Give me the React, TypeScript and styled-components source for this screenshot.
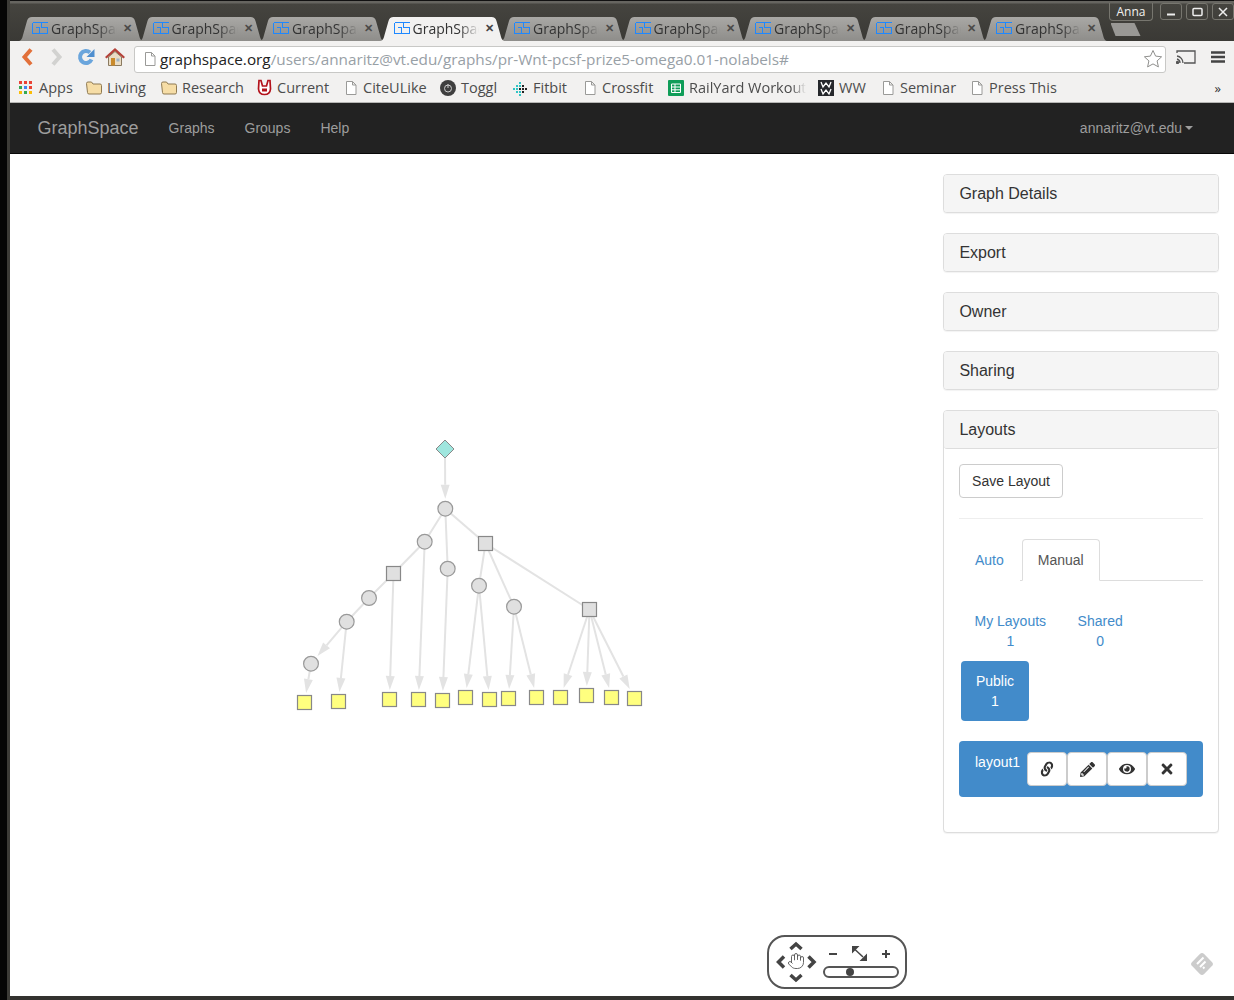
import React from "react"
import styled, { createGlobalStyle } from "styled-components"
import { FaEye, FaLink, FaPencilAlt, FaTimes } from "react-icons/fa"
import { Hand } from "lucide-react"

const GlobalStyle = createGlobalStyle`
    html, body {
        margin: 0;
        padding: 0;
        background: #000;
        overflow: hidden;
    }
`

const Desktop = styled.div`
    width: 1234px;
    height: 1000px;
    box-sizing: border-box;
    padding-left: 7px;
    background: #050505;
    overflow: hidden;
`

const Window = styled.div`
    height: 1000px;
    box-sizing: border-box;
    padding-left: 3px;
    display: flex;
    flex-direction: column;
    background: #3c3b37;
`

const TabStrip = styled.div`
    height: 41px;
    flex: none;
    box-sizing: border-box;
    border-top: 1px solid #111;
    background: linear-gradient(#666560 0, #666560 2px, #45443f 3px, #3a3935 100%);
`

const TitleRow = styled.div`
    height: 16px;
    display: flex;
    justify-content: flex-end;
    gap: 4px;
    padding-top: 2px;
    box-sizing: border-box;
`

const UserBadge = styled.div`
    width: 44px;
    height: 18px;
    box-sizing: border-box;
    margin-right: 3px;
    border: 1px solid #77766f;
    border-top: none;
    border-radius: 0 0 4px 4px;
    color: #f2f1f0;
    font: 12px/17px "Open Sans", sans-serif;
    text-align: center;
`

const WindowButton = styled.div`
    width: 22px;
    height: 17px;
    box-sizing: border-box;
    border: 1px solid #77766f;
    border-radius: 3px;
    display: flex;
    align-items: center;
    justify-content: center;
`

const TabRow = styled.div`
    display: flex;
    align-items: flex-end;
    height: 24px;
    padding-left: 8px;
`

const Tab = styled.div<{ $active?: boolean }>`
    position: relative;
    z-index: ${(p) => (p.$active ? 2 : 1)};
    width: 126px;
    height: 24px;
    flex: none;
    margin-right: -5.5px;
    box-sizing: border-box;
    padding: 0 0 2px 14px;
    display: flex;
    align-items: center;
    clip-path: path("M0 24 C3 24 4 22 5 18 L9 4 Q10 0 14 0 L112 0 Q116 0 117 4 L121 18 C122 22 123 24 126 24 Z");
    background: ${(p) => (p.$active ? "#f2f1f0" : "linear-gradient(#a9a8a5, #8e8d8a)")};
    color: #333;
    font: 14px "Open Sans", sans-serif;
`

const TabLabel = styled.span`
    width: 66px;
    margin-left: 3px;
    white-space: nowrap;
    overflow: hidden;
    -webkit-mask-image: linear-gradient(90deg, #000 70%, transparent 100%);
    mask-image: linear-gradient(90deg, #000 70%, transparent 100%);
`

const TabClose = styled.span<{ $active?: boolean }>`
    margin-left: 6px;
    font: bold 11px "Liberation Sans", sans-serif;
    color: ${(p) => (p.$active ? "#444" : "#4a4a48")};
`

const NewTab = styled.div`
    width: 30px;
    height: 13px;
    flex: none;
    margin: 0 0 5px 8px;
    background: #999895;
    clip-path: polygon(0 0, 24px 0, 30px 100%, 5px 100%);
`

const Toolbar = styled.div`
    height: 32px;
    flex: none;
    display: flex;
    align-items: flex-start;
    padding-left: 3px;
    background: #f2f1f0;
`

const NavButton = styled.div`
    width: 29px;
    height: 32px;
    flex: none;
    display: flex;
    align-items: center;
    justify-content: center;
`

const Omnibox = styled.div`
    width: 1032px;
    height: 27px;
    margin: 5px 0 0 5px;
    padding: 0 2px 2px 8px;
    box-sizing: border-box;
    flex: none;
    display: flex;
    align-items: center;
    border: 1px solid #c8c8c6;
    border-radius: 3px;
    background: #fff;
    font: 15.3px "Open Sans", sans-serif;
    white-space: nowrap;
`

const UrlHost = styled.span`
    margin-left: 3px;
    color: #222;
`

const UrlPath = styled.span`
    flex: 1;
    color: #98a0a6;
`

const ToolIcons = styled.div`
    display: flex;
    align-items: center;
    gap: 15px;
    margin: 9px 0 0 10px;
`

const Bookmarks = styled.div`
    height: 30px;
    flex: none;
    box-sizing: border-box;
    display: flex;
    align-items: center;
    padding: 0 10px 0 8px;
    border-bottom: 1px solid #b6b6b4;
    background: #f2f1f0;
    color: #4c4c4c;
    font: 14.5px "Open Sans", sans-serif;
`

const Bookmark = styled.div<{ $width: number }>`
    width: ${(p) => p.$width}px;
    flex: none;
    display: flex;
    align-items: center;
    gap: 5px;
    white-space: nowrap;
`

const FadedLabel = styled.span`
    width: 117px;
    overflow: hidden;
    -webkit-mask-image: linear-gradient(90deg, #000 88%, transparent 100%);
    mask-image: linear-gradient(90deg, #000 88%, transparent 100%);
`

const More = styled.span`
    margin-left: auto;
    margin-right: 3px;
    font: 13px "Open Sans", sans-serif;
    color: #333;
`

const Navbar = styled.div`
    height: 51px;
    flex: none;
    display: flex;
    align-items: center;
    padding: 0 41px 0 27.5px;
    background: #222;
    border-bottom: 1px solid #080808;
    box-sizing: border-box;
    color: #9d9d9d;
    font: 14px "Liberation Sans", sans-serif;
`

const Brand = styled.span`
    font-size: 18px;
    margin-right: 30px;
`

const NavLink = styled.span`
    margin-right: 30px;
`

const UserMenu = styled.span`
    margin-left: auto;
    display: flex;
    align-items: center;
    gap: 3px;
`

const Caret = styled.span`
    width: 0;
    height: 0;
    border-top: 4px solid #9d9d9d;
    border-left: 4px solid transparent;
    border-right: 4px solid transparent;
`

const Main = styled.div`
    position: relative;
    flex: 1;
    min-height: 0;
    display: flex;
    background: #fff;
    font: 14px/20px "Liberation Sans", sans-serif;
    color: #333;
`

const Canvas = styled.div`
    width: 933px;
    flex: none;
`

const Sidebar = styled.div`
    width: 276px;
    flex: none;
    padding-top: 20px;
    display: flex;
    flex-direction: column;
    gap: 20px;
`

const Panel = styled.div`
    border: 1px solid #ddd;
    border-radius: 4px;
    box-shadow: 0 1px 1px rgba(0, 0, 0, 0.05);
    background: #fff;
`

const PanelHeading = styled.div<{ $open?: boolean }>`
    height: 37px;
    box-sizing: content-box;
    padding: 0 15.4px;
    background: #f5f5f5;
    border-radius: 3px;
    border-bottom: ${(p) => (p.$open ? "1px solid #ddd" : "none")};
    font-size: 16px;
    line-height: 37px;
`

const PanelBody = styled.div`
    padding: 15px 15px 35px;
`

const DefaultButton = styled.div`
    width: 104px;
    height: 34px;
    box-sizing: border-box;
    border: 1px solid #ccc;
    border-radius: 4px;
    text-align: center;
    line-height: 32px;
`

const Divider = styled.div`
    height: 1px;
    margin: 20px 0;
    background: #eee;
`

const TabBar = styled.div`
    display: flex;
    height: 42px;
    box-sizing: border-box;
    border-bottom: 1px solid #ddd;
`

const PageTab = styled.div<{ $active?: boolean }>`
    height: 42px;
    box-sizing: border-box;
    padding: 10px 15px;
    margin-right: 2px;
    border: 1px solid ${(p) => (p.$active ? "#ddd" : "transparent")};
    border-bottom-color: ${(p) => (p.$active ? "#fff" : "transparent")};
    border-radius: 4px 4px 0 0;
    color: ${(p) => (p.$active ? "#555" : "#428bca")};
    background: #fff;
`

const Pills = styled.div`
    display: flex;
    margin: 20px 0 0 0.5px;
    gap: 1.5px;
`

const Pill = styled.div`
    padding: 10px 15px;
    text-align: center;
    color: #428bca;
`

const ActivePill = styled(Pill)`
    width: 68px;
    height: 60px;
    box-sizing: border-box;
    margin: 0 0 0 2px;
    padding: 10px 0;
    background: #428bca;
    border-radius: 4px;
    color: #fff;
`

const LayoutRow = styled.div`
    height: 56px;
    box-sizing: border-box;
    margin-top: 20px;
    padding: 11px 16px;
    display: flex;
    border-radius: 4px;
    background: #428bca;
    color: #fff;
`

const LayoutName = styled.span`
    width: 52px;
    flex: none;
`

const IconButton = styled.div<{ $size?: number; $tilt?: number }>`
    width: 40px;
    height: 34px;
    flex: none;
    box-sizing: border-box;
    border: 1px solid #ccc;
    border-radius: 4px;
    background: #fff;
    color: #333;
    display: flex;
    align-items: center;
    justify-content: center;
    font-size: ${(p) => p.$size ?? 14}px;

    svg {
        transform: rotate(${(p) => p.$tilt ?? 0}deg);
    }
`

const PanControl = styled.svg`
    position: absolute;
    left: 757px;
    bottom: 7px;
`

const FeedlyBadge = styled.svg`
    position: absolute;
    right: 19px;
    bottom: 19px;
`

const BottomEdge = styled.div`
    height: 4px;
    flex: none;
    background: #33322f;
`

const GsIcon = () => (
    <svg width="16" height="12" viewBox="0 0 16 12" fill="none" stroke="#1e88ff" strokeWidth="1" shapeRendering="crispEdges">
        <path d="M.5.5H15.500M.5.5V11.500H15.500M7.500 11.500V5.500H4M9.500.5V5.500H15.500V11.500" />
    </svg>
)

const DocIcon = () => (
    <svg width="14" height="16" viewBox="0 0 14 16" fill="#fff" stroke="#9a9a98">
        <path d="M2.500 1.500h6l3.500 3.500v9.500h-9.500zM8.500 1.500v3.500h3.500" />
    </svg>
)

const FolderIcon = () => (
    <svg width="16" height="14" viewBox="0 0 16 14">
        <path d="M.5 2.500q0-1.500 1.500-1.500h3.500l1.500 2h7q1.500 0 1.500 1.500v7q0 1.500-1.500 1.500h-11q-1.500 0-1.500-1.500z" fill="#f6dda6" stroke="#8f7a52" />
    </svg>
)

const AppsIcon = () => (
    <svg width="16" height="16" viewBox="0 0 16 16">
        {["#ea4335", "#ea4335", "#ea4335", "#34a853", "#4285f4", "#ea4335", "#fbbc05", "#34a853", "#fbbc05"].map((c, i) => (
            <rect key={i} x={1 + (i % 3) * 5} y={1 + Math.floor(i / 3) * 5} width="3" height="3" fill={c} />
        ))}
    </svg>
)

const RockIcon = () => (
    <svg width="15" height="17" viewBox="0 0 15 17">
        <path d="M2 1.500H4L5.500 7H9.500L11 1.500H13L13.500 10Q13 15.500 7.500 15.500Q2 15.500 1.500 10Z" fill="#fff" stroke="#b3121b" strokeWidth="1.700" />
        <path d="M5 9.500h5v3h-5z" fill="#b3121b" />
    </svg>
)

const ToggleIcon = () => (
    <svg width="16" height="16" viewBox="0 0 16 16">
        <circle cx="8" cy="8" r="8" fill="#3f3f3f" />
        <circle cx="8" cy="8.500" r="3.500" fill="none" stroke="#ccc" />
        <path d="M8 4v4" stroke="#ccc" />
    </svg>
)

const FitbitIcon = () => (
    <svg width="16" height="16" viewBox="0 0 16 16">
        {[[7, 2, "#2fc4c4"], [7, 5, "#2fc4c4"], [7, 8, "#222"], [7, 11, "#2fc4c4"], [7, 14, "#2fc4c4"], [4, 5, "#2fc4c4"], [4, 8, "#2fc4c4"], [4, 11, "#2fc4c4"], [1, 8, "#2fc4c4"], [10, 5, "#222"], [10, 8, "#222"], [10, 11, "#222"], [13, 8, "#222"]].map(([x, y, c], i) => (
            <rect key={i} x={x as number} y={y as number} width="2" height="2" fill={c as string} />
        ))}
    </svg>
)

const SheetIcon = () => (
    <svg width="16" height="16" viewBox="0 0 16 16">
        <rect width="16" height="16" rx="1" fill="#0f9d58" />
        <path d="M3.500 4h9v8.500h-9zM3.500 7h9M3.500 9.800h9M7 4v8.500" fill="none" stroke="#fff" />
    </svg>
)

const WwIcon = () => (
    <svg width="16" height="16" viewBox="0 0 16 16">
        <rect width="16" height="16" fill="#26282c" />
        <path d="M3 2l2 5 3-4 3 4 2-5M3 9l2 5 3-4 3 4 2-5" fill="none" stroke="#fff" strokeWidth="1.300" />
    </svg>
)

const tabs = [0, 1, 2, 3, 4, 5, 6, 7, 8]

const bookmarks: { label: string; width: number; icon: React.ReactNode }[] = [
    { label: "Apps", width: 68, icon: <AppsIcon /> },
    { label: "Living", width: 75, icon: <FolderIcon /> },
    { label: "Research", width: 96, icon: <FolderIcon /> },
    { label: "Current", width: 87, icon: <RockIcon /> },
    { label: "CiteULike", width: 96, icon: <DocIcon /> },
    { label: "Toggl", width: 72, icon: <ToggleIcon /> },
    { label: "Fitbit", width: 71, icon: <FitbitIcon /> },
    { label: "Crossfit", width: 85, icon: <DocIcon /> },
    { label: "RailYard Workout", width: 150, icon: <SheetIcon /> },
    { label: "WW", width: 63, icon: <WwIcon /> },
    { label: "Seminar", width: 89, icon: <DocIcon /> },
    { label: "Press This", width: 90, icon: <DocIcon /> },
]

type GraphNode = { x: number; y: number; kind: "start" | "circle" | "box" | "leaf" }

const nodes: Record<string, GraphNode> = {
    start: { x: 445, y: 449, kind: "start" },
    a: { x: 445.3, y: 508.7, kind: "circle" },
    b: { x: 424.7, y: 541.7, kind: "circle" },
    c: { x: 447.7, y: 568.7, kind: "circle" },
    d: { x: 369, y: 598, kind: "circle" },
    e: { x: 346.7, y: 621.7, kind: "circle" },
    f: { x: 311, y: 663.7, kind: "circle" },
    g: { x: 479, y: 585.7, kind: "circle" },
    h: { x: 514, y: 606.7, kind: "circle" },
    p: { x: 393.5, y: 573.5, kind: "box" },
    q: { x: 485.5, y: 543.5, kind: "box" },
    r: { x: 589.5, y: 609.5, kind: "box" },
    y1: { x: 304.5, y: 702.5, kind: "leaf" },
    y2: { x: 338.5, y: 701.5, kind: "leaf" },
    y3: { x: 389.5, y: 699.5, kind: "leaf" },
    y4: { x: 418.5, y: 699.5, kind: "leaf" },
    y5: { x: 442.5, y: 700.5, kind: "leaf" },
    y6: { x: 465.5, y: 697.5, kind: "leaf" },
    y7: { x: 489.5, y: 699.5, kind: "leaf" },
    y8: { x: 508.5, y: 698.5, kind: "leaf" },
    y9: { x: 536.5, y: 697.5, kind: "leaf" },
    y10: { x: 560.5, y: 697.5, kind: "leaf" },
    y11: { x: 586.5, y: 695.5, kind: "leaf" },
    y12: { x: 611.5, y: 697.5, kind: "leaf" },
    y13: { x: 634.5, y: 698.5, kind: "leaf" },
}

const lines = [["a", "b"], ["a", "c"], ["a", "q"], ["b", "p"], ["p", "d"], ["d", "e"], ["q", "g"], ["q", "h"], ["q", "r"]]

const arrows = [
    ["start", "a"], ["e", "f"], ["f", "y1"], ["e", "y2"], ["p", "y3"], ["b", "y4"], ["c", "y5"], ["g", "y6"], ["g", "y7"],
    ["h", "y8"], ["h", "y9"], ["r", "y10"], ["r", "y11"], ["r", "y12"], ["r", "y13"],
]

const arrowPoints = (from: GraphNode, to: GraphNode) => {
    const dx = to.x - from.x
    const dy = to.y - from.y
    const len = Math.hypot(dx, dy)
    const ux = dx / len
    const uy = dy / len
    const stop = to.kind === "leaf" ? 9.5 / Math.max(uy, 0.7) : 10
    const tipX = to.x - ux * stop
    const tipY = to.y - uy * stop
    const baseX = tipX - ux * 14
    const baseY = tipY - uy * 14
    return {
        baseX,
        baseY,
        head: `${tipX},${tipY} ${baseX - uy * 4.5},${baseY + ux * 4.5} ${baseX + uy * 4.5},${baseY - ux * 4.5}`,
    }
}

const Graph = () => (
    <svg width="933" height="842" viewBox="10 154 933 842">
        <g stroke="#e3e3e3" strokeWidth="2">
            {lines.map(([s, t]) => (
                <line key={s + t} x1={nodes[s].x} y1={nodes[s].y} x2={nodes[t].x} y2={nodes[t].y} />
            ))}
            {arrows.map(([s, t]) => {
                const pts = arrowPoints(nodes[s], nodes[t])
                return (
                    <g key={s + t}>
                        <line x1={nodes[s].x} y1={nodes[s].y} x2={pts.baseX} y2={pts.baseY} />
                        <polygon points={pts.head} fill="#e3e3e3" stroke="none" />
                    </g>
                )
            })}
        </g>
        {Object.entries(nodes).map(([id, n]) => {
            if (n.kind === "start") {
                return <polygon key={id} points={`${n.x},${n.y - 9} ${n.x + 9},${n.y} ${n.x},${n.y + 9} ${n.x - 9},${n.y}`} fill="#9fe6de" stroke="#888" />
            }
            if (n.kind === "circle") {
                return <circle key={id} cx={n.x} cy={n.y} r="7.400" fill="#e0e0e0" stroke="#999" strokeWidth="1.200" />
            }
            return (
                <rect key={id} x={n.x - 7} y={n.y - 7} width="14" height="14" fill={n.kind === "leaf" ? "#ffff7f" : "#e0e0e0"} stroke="#888" strokeWidth="1.200" />
            )
        })}
    </svg>
)

const App: React.FunctionComponent = () => {
    return <>
    <GlobalStyle />
    <Desktop>
        <Window>
            <TabStrip>
                <TitleRow>
                    <UserBadge>Anna</UserBadge>
                    <WindowButton>
                        <svg width="10" height="10"><path d="M1 7.500h8" stroke="#eee" strokeWidth="2" /></svg>
                    </WindowButton>
                    <WindowButton>
                        <svg width="11" height="10"><rect x="1" y="1.500" width="9" height="7" rx="1" fill="none" stroke="#eee" strokeWidth="1.500" /></svg>
                    </WindowButton>
                    <WindowButton>
                        <svg width="10" height="10"><path d="M1 1l8 8M9 1l-8 8" stroke="#eee" strokeWidth="1.500" /></svg>
                    </WindowButton>
                </TitleRow>
                <TabRow>
                    {tabs.map((i) => (
                        <Tab key={i} $active={i === 3}>
                            <GsIcon />
                            <TabLabel>GraphSpace</TabLabel>
                            <TabClose $active={i === 3}>✕</TabClose>
                        </Tab>
                    ))}
                    <NewTab />
                </TabRow>
            </TabStrip>
            <Toolbar>
                <NavButton>
                    <svg width="13" height="18" viewBox="0 0 13 18"><path d="M10 1.500l-6.500 7.500 6.500 7.500" fill="none" stroke="#e2703a" strokeWidth="4" /></svg>
                </NavButton>
                <NavButton>
                    <svg width="13" height="18" viewBox="0 0 13 18"><path d="M3 1.500l6.500 7.500-6.500 7.500" fill="none" stroke="#d2d2d0" strokeWidth="4" /></svg>
                </NavButton>
                <NavButton>
                    <svg width="18" height="18" viewBox="0 0 18 18">
                        <path d="M14.500 11.500a6 6 0 1 1-1.500-7" fill="none" stroke="#6aa5dc" strokeWidth="4" />
                        <path d="M17.500 1v8h-8z" fill="#4f8fcf" />
                    </svg>
                </NavButton>
                <NavButton>
                    <svg width="20" height="18" viewBox="0 0 20 18">
                        <path d="M10 0l10 9-1.500 1.500-8.500-7-8.500 7-1.500-1.500z" fill="#b5423a" />
                        <path d="M3.500 9l6.500-5.500 6.500 5.500v8.500h-13z" fill="#e9dcc4" stroke="#8a7a60" />
                        <rect x="6" y="10" width="4" height="7.500" fill="#c98a2b" />
                        <rect x="11.500" y="10.500" width="3" height="3" fill="#9fb4c4" />
                    </svg>
                </NavButton>
                <Omnibox>
                    <DocIcon />
                    <UrlHost>graphspace.org</UrlHost>
                    <UrlPath>/users/annaritz@vt.edu/graphs/pr-Wnt-pcsf-prize5-omega0.01-nolabels#</UrlPath>
                    <svg width="20" height="19" viewBox="0 0 20 19">
                        <path d="M10 1.500l2.600 5.600 6 .7-4.500 4.100 1.300 6-5.400-3-5.400 3 1.300-6-4.500-4.100 6-.7z" fill="#fff" stroke="#8f8f8d" />
                    </svg>
                </Omnibox>
                <ToolIcons>
                    <svg width="20" height="14" viewBox="0 0 20 14" fill="none" stroke="#555" strokeWidth="1.300">
                        <path d="M1 3V1h18v12H8M1 6a7 7 0 0 1 6 7M1 9a4 4 0 0 1 3 4" />
                        <circle cx="1.500" cy="12.500" r="1" fill="#555" />
                    </svg>
                    <svg width="14" height="14" viewBox="0 0 14 14" stroke="#444" strokeWidth="2.500">
                        <path d="M0 2.500h14M0 7h14M0 11.500h14" />
                    </svg>
                </ToolIcons>
            </Toolbar>
            <Bookmarks>
                {bookmarks.map((b) => (
                    <Bookmark key={b.label} $width={b.width}>
                        {b.icon}
                        {b.label === "RailYard Workout" ? <FadedLabel>{b.label}</FadedLabel> : <span>{b.label}</span>}
                    </Bookmark>
                ))}
                <More>»</More>
            </Bookmarks>
            <Navbar>
                <Brand>GraphSpace</Brand>
                <NavLink>Graphs</NavLink>
                <NavLink>Groups</NavLink>
                <NavLink>Help</NavLink>
                <UserMenu>annaritz@vt.edu<Caret /></UserMenu>
            </Navbar>
            <Main>
                <Canvas><Graph /></Canvas>
                <Sidebar>
                    <Panel><PanelHeading>Graph Details</PanelHeading></Panel>
                    <Panel><PanelHeading>Export</PanelHeading></Panel>
                    <Panel><PanelHeading>Owner</PanelHeading></Panel>
                    <Panel><PanelHeading>Sharing</PanelHeading></Panel>
                    <Panel>
                        <PanelHeading $open>Layouts</PanelHeading>
                        <PanelBody>
                            <DefaultButton>Save Layout</DefaultButton>
                            <Divider />
                            <TabBar>
                                <PageTab>Auto</PageTab>
                                <PageTab $active>Manual</PageTab>
                            </TabBar>
                            <Pills>
                                <Pill>My Layouts<br />1</Pill>
                                <Pill>Shared<br />0</Pill>
                            </Pills>
                            <ActivePill>Public<br />1</ActivePill>
                            <LayoutRow>
                                <LayoutName>layout1</LayoutName>
                                <IconButton $tilt={-14}><FaLink /></IconButton>
                                <IconButton $size={15}><FaPencilAlt /></IconButton>
                                <IconButton $size={16}><FaEye /></IconButton>
                                <IconButton $size={16}><FaTimes /></IconButton>
                            </LayoutRow>
                        </PanelBody>
                    </Panel>
                </Sidebar>
                <PanControl width="140" height="54" viewBox="767 935 140 54">
                    <rect x="768" y="936" width="138" height="52" rx="17" fill="#fff" stroke="#555" strokeWidth="2" />
                    <g fill="none" stroke="#444" strokeWidth="3.500">
                        <path d="M790.500 949l5.500-5 5.500 5M790.500 975l5.500 5 5.500-5M784 956.500l-5.500 5.500 5.500 5.500M808.500 956.500l5.500 5.500-5.500 5.500" />
                    </g>
                    <path d="M829 954h8M882 954h8M886 950v8" stroke="#444" strokeWidth="2" />
                    <path d="M855 949.500l8 7.500" stroke="#444" strokeWidth="1.500" />
                    <path d="M852 946h7.500l-7.500 7.500zM867 961h-7.500l7.500-7.500z" fill="#444" />
                    <rect x="824" y="967" width="74" height="10" rx="5" fill="#fff" stroke="#555" strokeWidth="2" />
                    <circle cx="850" cy="972" r="4" fill="#444" />
                    <Hand x="787" y="952" width="18" height="18" stroke="#555" strokeWidth="1.200" />
                </PanControl>
                <FeedlyBadge width="26" height="26" viewBox="0 0 26 26">
                    <rect x="4.500" y="4.500" width="17" height="17" rx="3" transform="rotate(45 13 13)" fill="#cccccc" />
                    <path d="M14.500 6.500L8 13M16.500 10.500l-5.500 5.500M15.500 16l-1.500 1.500" stroke="#fff" strokeWidth="2" />
                </FeedlyBadge>
            </Main>
            <BottomEdge />
        </Window>
    </Desktop>
    </>
}

export default App
